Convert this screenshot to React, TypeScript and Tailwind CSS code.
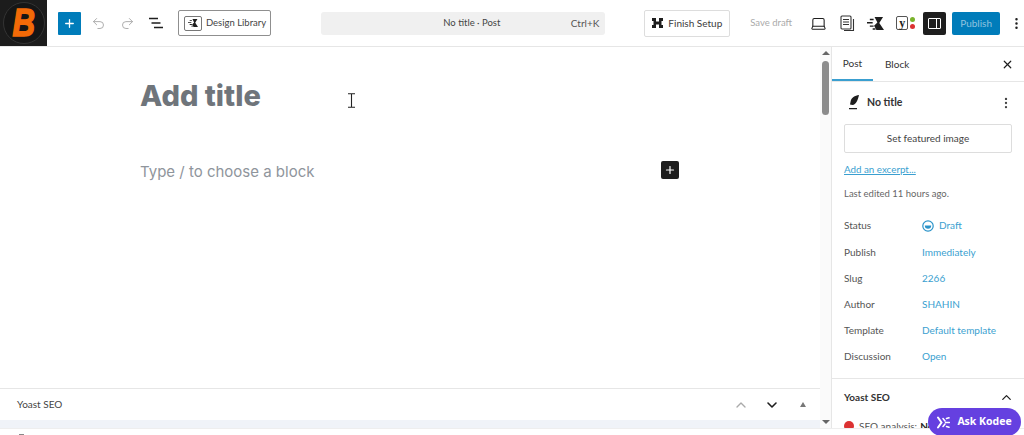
import {
  ChevronDown,
  ChevronUp,
  Laptop,
  MoreVertical,
  Plus,
  Undo2,
  Redo2,
  X,
} from "lucide-react";

const meta = [
  { label: "Status", value: "Draft", draft: true },
  { label: "Publish", value: "Immediately" },
  { label: "Slug", value: "2266" },
  { label: "Author", value: "SHAHIN" },
  { label: "Template", value: "Default template" },
  { label: "Discussion", value: "Open" },
];

function KadenceMark({ size = 16 }: { size?: number }) {
  return (
    <svg width={size} height={size} viewBox="0 0 18 16" fill="#1e1e1e">
      <path d="M8 1h9l-4 6.500L18 15H10L7.500 10.500 11 7z" />
      <path d="M3 3h4v1.500H3zM0 6.500h6V8H0zM3 10h4v1.500H3zM6 13h3v1.500H6z" />
    </svg>
  );
}

function Toolbar() {
  return (
    <header className="flex h-[47px] shrink-0 items-center border-b border-[#e6e6e6] bg-white">
      <div className="flex h-[46px] w-[47px] shrink-0 items-center justify-center bg-[#1c1c1c]">
        <div className="flex h-[42px] w-[42px] items-center justify-center rounded-full border border-[#333] bg-[#161616]">
          <span className="scale-x-[.82] font-['Liberation_Sans'] text-[38px] leading-none font-bold text-[#f36a07] italic [-webkit-text-stroke:1.5px_#f36a07]">B</span>
        </div>
      </div>
      <button className="ml-[11px] flex h-[23px] w-[23px] items-center justify-center rounded-[1px] bg-[#007cba] text-white">
        <Plus size={13} strokeWidth={2.4} />
      </button>
      <Undo2 size={15} strokeWidth={1.5} className="ml-[10px] text-[#a8a8a8]" />
      <Redo2 size={15} strokeWidth={1.5} className="ml-[14px] text-[#a8a8a8]" />
      <svg width="16" height="12" viewBox="0 0 16 12" className="ml-[13px]" stroke="#1e1e1e" strokeWidth="1.5">
        <path d="M1 1.500h9M3.500 6h9M6 10.500h9" />
      </svg>
      <button className="ml-[14px] flex h-[26px] w-[93px] items-center rounded-[2px] border border-[#8f8f8f] pl-[5px] text-[#444]">
        <span className="flex h-[15px] w-[18px] items-center justify-center rounded-[2px] border-[1.500px] border-[#777]">
          <KadenceMark size={10} />
        </span>
        <span className="ml-[4px] text-[9.500px] whitespace-nowrap">Design Library</span>
      </button>
      <div className="ml-[50px] flex h-[23px] w-[285px] items-center rounded-[3px] bg-[#f0f0f0] text-[9.500px] text-[#444]">
        <span className="flex-1 pl-[52px] text-center">No title · Post</span>
        <span className="pr-[6px] text-[10px] text-[#555]">Ctrl+K</span>
      </div>
      <button className="ml-[39px] flex h-[27px] w-[86px] items-center justify-center gap-[5px] rounded-[2px] border border-[#ddd] text-[10px] text-[#3c3c3c]">
        <svg width="11" height="10" viewBox="0 0 11 10" fill="#1e1e1e">
          <path d="M0 0h4v3.500h3V0h4v3h-1.500v4H11v3H7V6.500H4V10H0V7h1.500V3H0z" />
        </svg>
        Finish Setup
      </button>
      <span className="ml-[20px] w-[42px] text-[9.500px] whitespace-nowrap text-[#aaa]">Save draft</span>
      <Laptop size={17} strokeWidth={1.5} className="ml-[18px] text-[#1e1e1e]" />
      <svg width="15" height="17" viewBox="0 0 15 17" fill="none" stroke="#333" strokeWidth="1.100" className="ml-[13px]">
        <rect x="1" y="1" width="10" height="13" rx="1" />
        <path d="M3 4.500h6M3 7h6M3 9.500h6M13.500 4v11.500H4" />
      </svg>
      <span className="ml-[12px]">
        <KadenceMark size={17} />
      </span>
      <span className="ml-[12px] flex items-center">
        <span className="flex h-[14px] w-[12px] items-center justify-center rounded-[2px] border border-[#555] font-['Liberation_Serif'] text-[12px] leading-none font-bold text-[#222]">y</span>
        <span className="ml-[2px] flex flex-col gap-[2px]">
          <span className="h-[5px] w-[5px] rounded-full bg-[#7ab32b]" />
          <span className="h-[5px] w-[5px] rounded-full bg-[#dc3232]" />
        </span>
      </span>
      <div className="ml-[8px] flex h-[23px] w-[23px] items-center justify-center rounded-[2px] bg-[#1e1e1e]">
        <span className="flex h-[11px] w-[13px] justify-end rounded-[1px] border-[1.500px] border-white">
          <span className="h-full w-[4px] border-l-[1.500px] border-white" />
        </span>
      </div>
      <button className="ml-[6px] h-[23px] w-[48px] rounded-[2px] bg-[#007cba] text-[10px] text-[#8fc3df]">Publish</button>
      <MoreVertical size={15} strokeWidth={2} className="ml-[9px] text-[#1e1e1e]" />
    </header>
  );
}

function Editor() {
  return (
    <div className="flex min-w-0 flex-1 flex-col">
      <div className="relative flex-1 pt-[28px] pl-[140px]">
        <h1 className="font-['Inter'] text-[29px] leading-[42px] font-extrabold text-[#6f757b]">Add title</h1>
        <p className="mt-[44px] font-['Inter'] text-[15px] leading-[22px] text-[#8f959c]">Type / to choose a block</p>
        <button className="absolute top-[114px] left-[661px] flex h-[18px] w-[18px] items-center justify-center rounded-[2px] bg-[#1e1e1e] text-white">
          <Plus size={12} strokeWidth={2.4} />
        </button>
        <svg width="9" height="15" viewBox="0 0 9 15" fill="none" stroke="#222" strokeWidth="1.100" className="absolute top-[46px] left-[347px]">
          <path d="M1 .8h7M1 14.200h7M4.500 .8v13.400" />
        </svg>
      </div>
      <div className="flex h-[32px] shrink-0 items-center border-t border-[#e6e6e6] bg-white pr-[10px] pl-[17px]">
        <span className="flex-1 text-[10px] text-[#444]">Yoast SEO</span>
        <ChevronUp size={16} strokeWidth={2} className="text-[#aaa]" />
        <ChevronDown size={16} strokeWidth={2.4} className="ml-[15px] text-[#1e1e1e]" />
        <span className="mr-[4px] ml-[20px] h-0 w-0 border-x-[3.500px] border-b-[5px] border-x-transparent border-b-[#777]" />
      </div>
      <div className="h-[8px] shrink-0 bg-[#f0f3f8]" />
    </div>
  );
}

function Scrollbar() {
  return (
    <div className="flex h-full w-[12px] shrink-0 flex-col items-center border-r border-[#e6e6e6] bg-[#fafafa]">
      <span className="mt-[4px] h-0 w-0 border-x-[4px] border-b-[4px] border-x-transparent border-b-[#666]" />
      <span className="mt-[6px] h-[54px] w-[7px] rounded-full bg-[#8c8c8c]" />
      <span className="mt-auto mb-[4px] h-0 w-0 border-x-[4px] border-t-[4px] border-x-transparent border-t-[#666]" />
    </div>
  );
}

function Sidebar() {
  return (
    <aside className="relative w-[192px] shrink-0 overflow-hidden bg-white">
      <div className="flex h-[35px] items-center border-b border-[#e6e6e6] text-[10px] text-[#333]">
        <span className="flex h-full w-[41px] items-center justify-center border-b-2 border-[#3a9fd0] pt-[1px]">Post</span>
        <span className="ml-[12px] pt-[1px]">Block</span>
        <X size={13} strokeWidth={2.2} className="mr-[10px] ml-auto text-[#1e1e1e]" />
      </div>
      <div className="px-[12px]">
        <div className="flex items-center pt-[13px]">
          <svg width="13" height="15" viewBox="0 0 13 15" fill="#1e1e1e" className="ml-[3px]">
            <path d="M12 0C8 .5 4 2.500 3.500 7L3 9.500 5.500 10C9 9.500 11 5 12 0zM2 13h8v1.300H2z" />
          </svg>
          <span className="ml-[7px] flex-1 text-[10.500px] font-bold text-[#333]">No title</span>
          <MoreVertical size={14} strokeWidth={2} className="mr-[-1px] text-[#444]" />
        </div>
        <button className="mt-[13px] h-[29px] w-[168px] rounded-[2px] border border-[#ddd] text-[10px] text-[#444]">Set featured image</button>
        <a className="mt-[9px] block text-[9.800px] leading-[14px] text-[#3a9fd0] underline">Add an excerpt...</a>
        <p className="mt-[11px] text-[9.500px] leading-[14px] text-[#666]">Last edited 11 hours ago.</p>
        <dl className="mt-[12px]">
          {meta.map((row) => (
            <div key={row.label} className="flex h-[26.200px] items-center text-[10px]">
              <dt className="w-[78px] text-[#555]">{row.label}</dt>
              <dd className="flex items-center text-[#3a9fd0]">
                {row.draft && (
                  <svg width="12" height="12" viewBox="0 0 12 12" className="mr-[5px]">
                    <circle cx="6" cy="6" r="5.200" fill="none" stroke="#2a93c9" strokeWidth="1.200" />
                    <path d="M2.800 5.500h6.400a3.200 3.200 0 0 1-6.400 0z" fill="#2a93c9" />
                  </svg>
                )}
                {row.value}
              </dd>
            </div>
          ))}
        </dl>
      </div>
      <div className="mt-[8px] border-t border-[#e6e6e6] px-[12px] pt-[11px]">
        <div className="flex items-center text-[10px] font-bold text-[#333]">
          <span className="flex-1">Yoast SEO</span>
          <ChevronUp size={15} strokeWidth={2} className="mr-[-2px] text-[#1e1e1e]" />
        </div>
        <div className="mt-[14px] flex items-center whitespace-nowrap text-[10px] text-[#555]">
          <span className="mr-[5px] h-[10px] w-[10px] rounded-full bg-[#dc3232]" />
          SEO analysis: <b className="ml-[3px] text-[#222]">No</b>
        </div>
      </div>
    </aside>
  );
}

export default function App() {
  return (
    <div className="relative flex h-[435px] w-[1024px] flex-col overflow-hidden bg-white font-['Lato',sans-serif]">
      <Toolbar />
      <main className="flex h-[381px] shrink-0 overflow-hidden">
        <Editor />
        <Scrollbar />
        <Sidebar />
      </main>
      <div className="flex-1 border-t border-[#eeeeee] bg-white pt-[5px] pl-[19px]">
        <div className="h-[1px] w-[5px] bg-[#888]" />
      </div>
      <button className="absolute top-[408px] left-[928px] flex h-[28px] w-[93px] items-center justify-center gap-[7px] rounded-full bg-[#6540e0] font-['Open_Sans'] text-[10.500px] font-bold text-white">
        <svg width="13" height="13" viewBox="0 0 13 13" fill="none" stroke="white" strokeWidth="2" strokeLinecap="round">
          <path d="M1 1.500 4.500 6.500 1 11.500" />
          <path d="M6 2.500 8 5M6 10.500 8 8M8.500 6.500H12.500M9.500 2.500 12 1.800M9.500 10.500 12 11.200" strokeWidth="1.500" />
        </svg>
        Ask Kodee
      </button>
    </div>
  );
}
